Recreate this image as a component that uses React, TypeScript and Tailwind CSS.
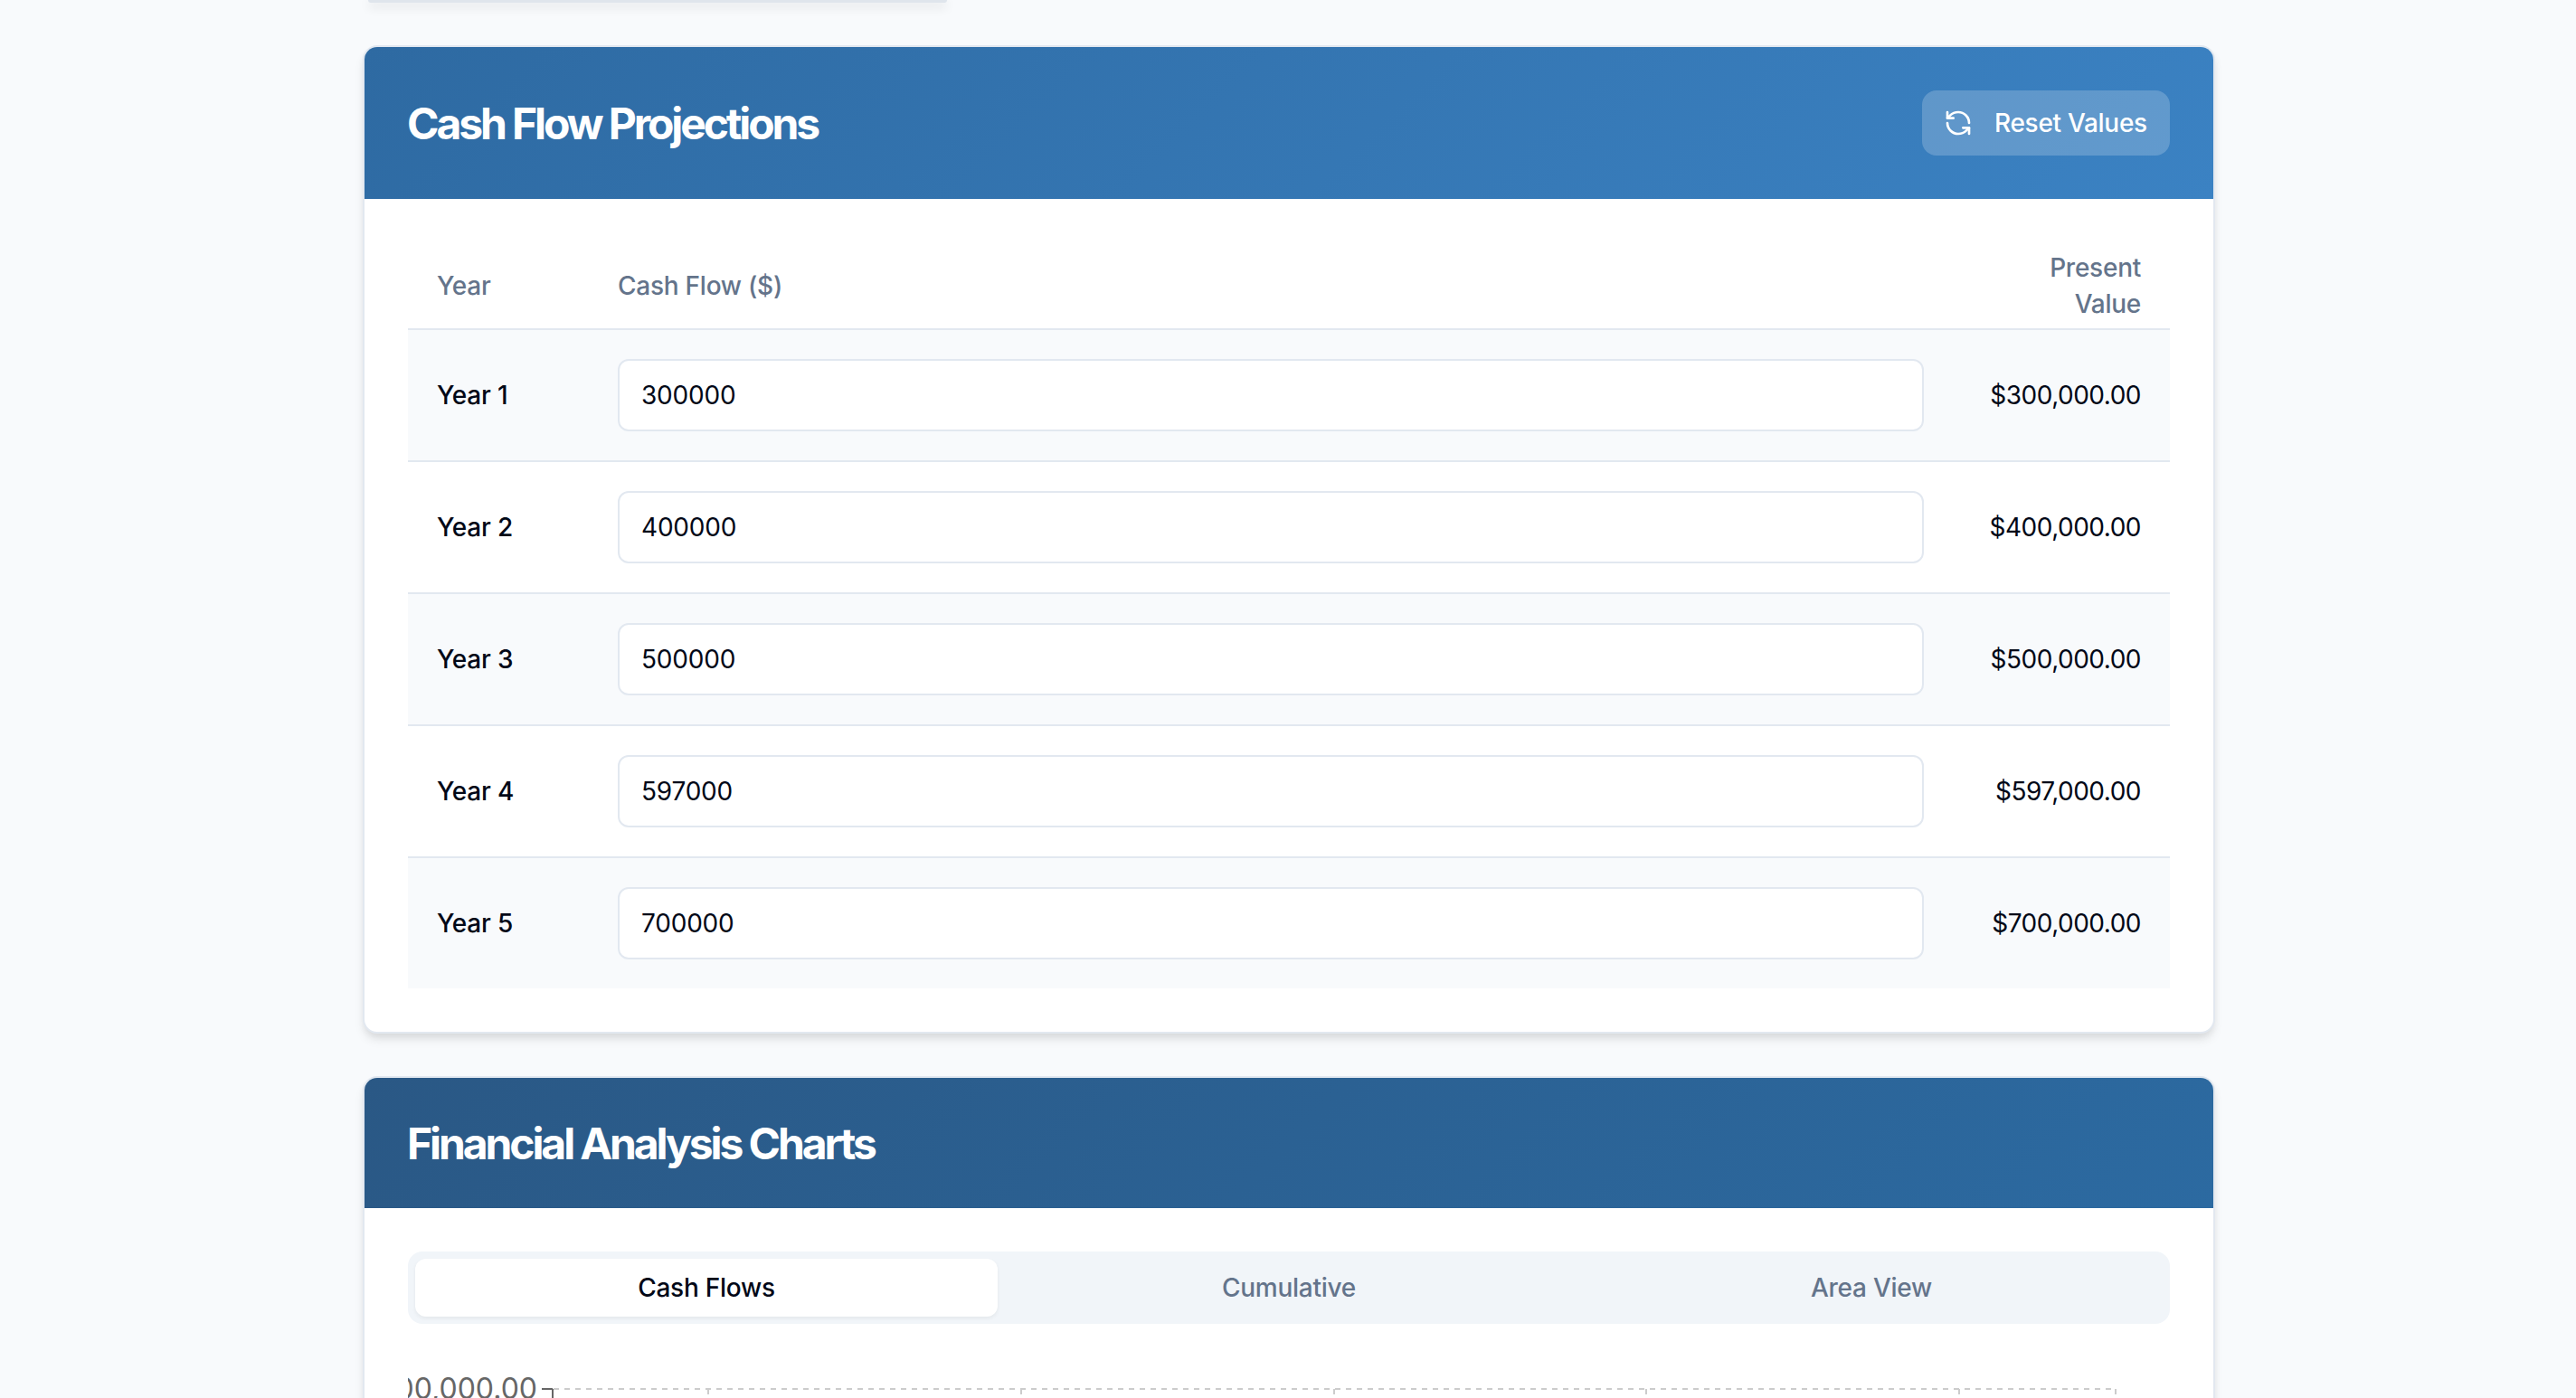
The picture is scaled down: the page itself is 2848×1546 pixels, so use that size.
import { RefreshCcw } from "lucide-react";

const ROWS = [
  { year: "Year 1", value: "300000", pv: "$300,000.00" },
  { year: "Year 2", value: "400000", pv: "$400,000.00" },
  { year: "Year 3", value: "500000", pv: "$500,000.00" },
  { year: "Year 4", value: "597000", pv: "$597,000.00" },
  { year: "Year 5", value: "700000", pv: "$700,000.00" },
];

const TICKS = [611, 783, 1129, 1475, 1820, 2166, 2339];

export default function App() {
  return (
    <div className="h-[1546px] overflow-hidden bg-[#f8fafc] pl-[2px] font-['Inter',sans-serif] text-[28px] leading-[40px] text-[#020817]">
      <div className="mx-auto flex w-[2048px] flex-col gap-[47px]">
        <div className="ml-[6px] h-[3px] w-[640px] self-start rounded-b-[12px] bg-[#dfe5ec] shadow-[0_4px_12px_rgba(0,0,0,0.18)]" />
        <CashFlowCard />
        <ChartsCard />
      </div>
    </div>
  );
}

function CardHeader({ title, className, children }: { title: string; className: string; children?: React.ReactNode }) {
  return (
    <div className={`flex items-center justify-between pr-[48px] pl-[47px] ${className}`}>
      <h2 className="pt-[1px] text-[48px] leading-[48px] font-bold tracking-[-3.1px] text-white">{title}</h2>
      {children}
    </div>
  );
}

function CashFlowCard() {
  return (
    <section className="overflow-hidden rounded-[16px] border-2 border-[#e2e8f0] bg-white shadow-[0_8px_12px_-2px_rgba(0,0,0,0.1),0_4px_8px_-2px_rgba(0,0,0,0.06)]">
      <CardHeader title="Cash Flow Projections" className="h-[168px] bg-linear-[135deg] from-[#2e6aa2] to-[#3b82c3]">
        <button
          type="button"
          className="flex h-[72px] w-[274px] items-center gap-[24px] rounded-[16px] bg-white/20 pl-[24px] font-medium tracking-[-0.3px] text-white"
        >
          <RefreshCcw size={32} strokeWidth={2} />
          Reset Values
        </button>
      </CardHeader>
      <div className="p-[48px]">
        <table className="w-full table-fixed border-collapse">
          <colgroup>
            <col className="w-[200px]" />
            <col />
            <col className="w-[240px]" />
          </colgroup>
          <thead>
            <tr className="border-b-2 border-[#e2e8f0] text-[#64748b]">
              <th className="h-[96px] px-[32px] text-left font-medium tracking-[-0.25px]">Year</th>
              <th className="h-[96px] px-[32px] text-left font-medium tracking-[-0.25px]">Cash Flow ($)</th>
              <th className="h-[96px] px-[32px] text-right font-medium tracking-[-0.25px]">Present Value</th>
            </tr>
          </thead>
          <tbody>
            {ROWS.map((row, i) => (
              <tr key={row.year} className={`${i < 4 ? "border-b-2 border-[#e2e8f0]" : ""} ${i % 2 === 0 ? "bg-[#f8fafc]" : ""}`}>
                <td className="px-[32px] py-[32px] font-medium tracking-[-0.2px]">{row.year}</td>
                <td className="px-[32px] py-[32px]">
                  <input
                    readOnly
                    value={row.value}
                    className="block h-[80px] w-full rounded-[12px] border-2 border-[#e2e8f0] bg-white px-[24px] text-[28px] tracking-[-0.2px] outline-none"
                  />
                </td>
                <td className="px-[32px] py-[32px] text-right tracking-[-0.5px]">{row.pv}</td>
              </tr>
            ))}
          </tbody>
        </table>
      </div>
    </section>
  );
}

function ChartsCard() {
  return (
    <section className="rounded-[16px] border-2 border-[#e2e8f0] bg-white shadow-[0_8px_12px_-2px_rgba(0,0,0,0.1),0_4px_8px_-2px_rgba(0,0,0,0.06)]">
      <CardHeader title="Financial Analysis Charts" className="h-[144px] rounded-t-[14px] bg-linear-[135deg] from-[#2a5885] to-[#2c6aa1]" />
      <div className="p-[48px]">
        <div className="grid h-[80px] grid-cols-3 rounded-[16px] bg-[#f1f5f9] p-[8px] font-medium tracking-[-0.25px] text-[#64748b]">
          <div className="flex items-center justify-center rounded-[12px] bg-white text-[#020817] shadow-[0_2px_4px_rgba(0,0,0,0.06)]">Cash Flows</div>
          <div className="flex items-center justify-center">Cumulative</div>
          <div className="flex items-center justify-center">Area View</div>
        </div>
        <svg width={1948} height={400} viewBox="451 1513 1948 400" className="mt-[48px] block">
          <line x1={612} x2={2339} y1={1537} y2={1537} stroke="#ccc" strokeWidth={2} strokeDasharray="6 6" />
          {TICKS.map((x) => (
            <line key={x} x1={x} x2={x} y1={1537} y2={1900} stroke="#ccc" strokeWidth={2} strokeDasharray="6 6" />
          ))}
          <line x1={599} x2={611} y1={1537} y2={1537} stroke="#666" strokeWidth={2} />
          <line x1={611} x2={611} y1={1537} y2={1900} stroke="#666" strokeWidth={2} />
          <text x={594} y={1548} textAnchor="end" fontSize={32} fill="#666">$800,000.00</text>
        </svg>
      </div>
    </section>
  );
}
